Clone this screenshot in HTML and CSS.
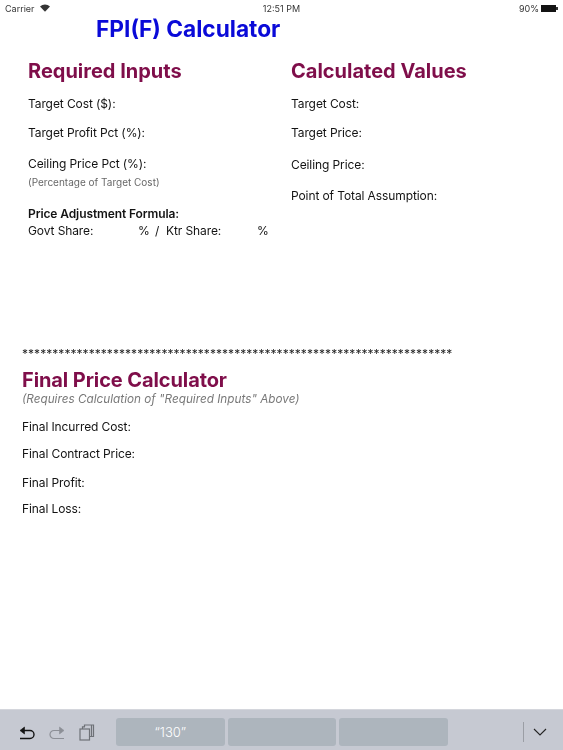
FILE: index.html
```html
<!DOCTYPE html>
<html lang="en">
<head>
  <meta charset="UTF-8" />
  <title>FPI(F) Calculator</title>
  <link rel="stylesheet" href="styles.css">
</head>
<body>
  <div class="screen">
    <div class="statusbar">
      <div class="status-left">
        <span>Carrier</span>
        <svg class="wifi" width="10" height="8" viewBox="0 0 12 9"><path d="M6 9 L0 2.8 C3.4 -0.6 8.6 -0.6 12 2.8 Z" fill="#333"/></svg>
      </div>
      <div class="status-time">12:51 PM</div>
      <div class="status-right">
        <span>90%</span>
        <div class="battery"></div>
        <div class="battery-tip"></div>
      </div>
    </div>

    <h1 class="app-title">FPI(F) Calculator</h1>

    <div class="columns">
      <div class="col-left">
        <h2 class="heading">Required Inputs</h2>
        <div class="row row-cost">Target Cost ($):</div>
        <div class="row row-profit">Target Profit Pct (%):</div>
        <div class="row row-ceiling">Ceiling Price Pct (%):</div>
        <div class="note">(Percentage of Target Cost)</div>
        <div class="formula-title">Price Adjustment Formula:</div>
        <div class="shares">
          <span class="share-govt">Govt Share:</span>
          <span class="share-pct">%</span>
          <span class="share-slash">/</span>
          <span class="share-ktr">Ktr Share:</span>
          <span>%</span>
        </div>
      </div>
      <div class="col-right">
        <h2 class="heading">Calculated Values</h2>
        <div class="row row-cost">Target Cost:</div>
        <div class="row row-profit">Target Price:</div>
        <div class="row row-ceiling2">Ceiling Price:</div>
        <div class="row row-point">Point of Total Assumption:</div>
      </div>
    </div>

    <div class="final">
      <div class="stars">***********************************************************************</div>
      <h2 class="heading">Final Price Calculator</h2>
      <div class="requires">(Requires Calculation of "Required Inputs" Above)</div>
      <div class="row final-incurred">Final Incurred Cost:</div>
      <div class="row final-contract">Final Contract Price:</div>
      <div class="row final-profit">Final Profit:</div>
      <div class="row final-loss">Final Loss:</div>
    </div>

    <div class="toolbar">
      <div class="tool-icons">
        <svg width="16" height="16" viewBox="0 0 16 16" fill="none" stroke="#111" stroke-width="1.4"><path d="M1 14.5 H11 A4 4 0 0 0 11 6.5 H3"/><path d="M5.5 3 L1 6.5 L5.5 10 Z" fill="#111" stroke-width="0.6"/></svg>
        <svg width="16" height="16" viewBox="0 0 16 16" fill="none" stroke="#8b8e95" stroke-width="1.2"><path d="M15 14.5 H5 A4 4 0 0 1 5 6.5 H13"/><path d="M10.5 3 L15 6.5 L10.5 10 Z" fill="#8b8e95" stroke-width="0.6"/></svg>
        <svg width="16" height="17" viewBox="0 0 16 17" fill="none" stroke="#6d7076" stroke-width="1.2"><rect x="1" y="5" width="9.5" height="11"/><path d="M3.5 5 V2.8 H6 M5.5 3 V1 H14.5 V12.5 H10.5 M12.5 1 V12" /></svg>
      </div>
      <div class="suggestions">
        <div class="suggestion">“130”</div>
        <div class="suggestion"></div>
        <div class="suggestion"></div>
      </div>
      <div class="kb-divider"></div>
      <svg class="kb-chevron" width="14" height="8" viewBox="0 0 14 8" fill="none" stroke="#222" stroke-width="1.1"><path d="M1 1 L7 7 L13 1"/></svg>
    </div>
  </div>
</body>
</html>
```

FILE: styles.css
```css
* {
  box-sizing: border-box;
}
html, body {
  margin: 0;
  padding: 0;
}
body {
  width: 563px;
  height: 750px;
  overflow: hidden;
  background: #fff;
  font-family: Inter, "Liberation Sans", sans-serif;
  color: #111;
}
.screen {
  display: flex;
  flex-direction: column;
  height: 750px;
  opacity: 0.99;
}

/* status bar */
.statusbar {
  display: grid;
  grid-template-columns: 1fr auto 1fr;
  align-items: center;
  height: 16px;
  padding: 0 5px;
  font-size: 9px;
  color: #333;
}
.status-left {
  display: flex;
  align-items: center;
  gap: 5px;
}
.status-right {
  display: flex;
  align-items: center;
  justify-content: flex-end;
}
.status-right span {
  margin-right: 2px;
}
.battery {
  width: 15px;
  height: 7px;
  background: #111;
}
.battery-tip {
  width: 2px;
  height: 3px;
  background: #333;
}

.app-title {
  margin: -2px 0 0 96px;
  font-size: 22.7px;
  line-height: 29px;
  font-weight: 700;
  color: #0808d8;
}

.columns {
  display: flex;
  height: 304px;
  padding-top: 15px;
}
.col-left {
  width: 291px;
  padding-left: 28px;
}
.col-right {
  flex: 1;
}
.heading {
  margin: 0;
  font-size: 20px;
  line-height: 26px;
  font-weight: 700;
  color: #7e0c48;
}
.row {
  font-size: 12px;
  line-height: 16px;
  letter-spacing: -0.1px;
}
.row-cost { margin-top: 12px; }
.row-profit { margin-top: 13px; }
.row-ceiling { margin-top: 15px; }
.row-ceiling2 { margin-top: 16px; }
.row-point { margin-top: 15px; }
.note {
  margin-top: 4px;
  font-size: 10px;
  line-height: 12px;
  color: #666;
}
.formula-title {
  margin-top: 18px;
  font-size: 12px;
  line-height: 16px;
  font-weight: 600;
  letter-spacing: -0.1px;
}
.shares {
  display: flex;
  margin-top: 1px;
  font-size: 12px;
  line-height: 16px;
  letter-spacing: -0.1px;
}
.share-govt { width: 110px; }
.share-pct { width: 17px; }
.share-slash { width: 11px; }
.share-ktr { width: 91px; }

.final {
  flex: 1;
  padding-left: 22px;
}
.stars {
  font-size: 12px;
  letter-spacing: 0.05px;
  line-height: 14px;
  color: #222;
  white-space: nowrap;
}
.final .heading {
  margin-top: 6px;
  letter-spacing: -0.1px;
}
.requires {
  margin-top: -1px;
  font-size: 11.75px;
  line-height: 14px;
  font-style: italic;
  color: #777;
}
.final-incurred { margin-top: 13px; }
.final-contract { margin-top: 11px; }
.final-profit { margin-top: 13px; }
.final-loss { margin-top: 10px; }

/* keyboard shortcut bar */
.toolbar {
  display: flex;
  align-items: center;
  height: 41px;
  background: #c6c9d2;
  border-top: 1px solid #d4d6dc;
  padding: 4px 0 0 19px;
}
.tool-icons {
  display: flex;
  align-items: center;
  gap: 14px;
  width: 97px;
  flex-shrink: 0;
}
.suggestions {
  display: flex;
  gap: 3px;
}
.suggestion {
  width: 108.7px;
  height: 28px;
  background: #adb5bd;
  border-radius: 3px;
  color: #fff;
  font-size: 13px;
  font-weight: 300;
  line-height: 28px;
  text-align: center;
}
.kb-divider {
  width: 1px;
  height: 20px;
  margin-left: 75px;
  background: #9a9da4;
}
.kb-chevron {
  margin-left: 9px;
}
```
